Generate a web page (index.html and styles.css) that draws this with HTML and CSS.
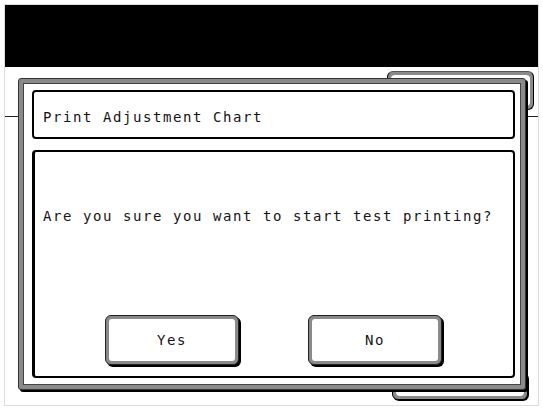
FILE: index.html
```html
<!DOCTYPE html>
<html>
<head>
<meta charset="utf-8">
<link rel="stylesheet" href="styles.css">
</head>
<body>
<div class="screen">
  <div class="header"></div>
  <div class="stage">
    <div class="rule"></div>
    <div class="tab tab-top"></div>
    <div class="tab tab-bottom"></div>
    <div class="dialog">
      <div class="dialog-inner">
        <div class="title-box">Print Adjustment Chart</div>
        <div class="message-box">
          <div class="message">Are you sure you want to start test printing?</div>
          <div class="buttons">
            <div class="btn"><div class="btn-face">Yes</div></div>
            <div class="btn"><div class="btn-face">No</div></div>
          </div>
        </div>
      </div>
    </div>
  </div>
</div>
</body>
</html>
```

FILE: styles.css
```css
* { box-sizing: border-box; }
html, body { margin: 0; padding: 0; background: #fff; }
body {
  width: 543px;
  height: 409px;
  overflow: hidden;
  font-family: "DejaVu Sans Mono", "Liberation Mono", monospace;
  font-size: 14px;
  letter-spacing: 1.57px;
  color: #141414;
}
.screen {
  margin: 4px;
  width: 535px;
  height: 402px;
  border: 1px solid #dcdcdc;
  display: flex;
  flex-direction: column;
}
.header {
  height: 62px;
  background: #000;
  flex: none;
}
.stage {
  position: relative;
  flex: 1;
  padding: 11px 0 0 13px;
}
.rule {
  position: absolute;
  left: 0;
  right: 0;
  top: 49px;
  height: 1px;
  background: #222;
}
.tab {
  position: absolute;
  background: #8a8a8a;
  border: 1px solid #000;
  border-radius: 6px;
}
.tab::before {
  content: "";
  position: absolute;
  inset: 3px;
  background: #fff;
  border-radius: 4px;
}
.tab-top {
  left: 382px;
  top: 4px;
  width: 147px;
  height: 39px;
  border-top-color: #555;
}
.tab-bottom {
  left: 387px;
  top: 305px;
  width: 136px;
  height: 28px;
  box-shadow: 1px 1px 0 #000;
}
.dialog {
  position: relative;
  z-index: 1;
  width: 508px;
  height: 312px;
  border: 1px solid #333;
  border-radius: 3px;
  padding: 4px;
  background: #8a8a8a;
  box-shadow: 2px 2px 0 #000;
}
.dialog-inner {
  height: 100%;
  background: #fff;
  border: 1px solid #444;
  padding: 6px 5px 0 8px;
  display: flex;
  flex-direction: column;
  gap: 11px;
}
.title-box {
  height: 49px;
  border: 2px solid #000;
  border-radius: 4px;
  padding-left: 9px;
  padding-top: 4px;
  display: flex;
  align-items: center;
}
.message-box {
  height: 228px;
  border: 2px solid #000;
  border-left-width: 3px;
  border-radius: 4px;
  display: flex;
  flex-direction: column;
  padding: 54px 0 11px 8px;
}
.message {
  line-height: 20px;
  height: 20px;
}
.buttons {
  margin-top: auto;
  display: flex;
  justify-content: center;
  gap: 69px;
  padding-right: 9px;
}
.btn {
  width: 134px;
  height: 50px;
  border: 1px solid #222;
  border-radius: 6px;
  padding: 3px;
  background: #8a8a8a;
  box-shadow: 2px 2px 0 #000;
}
.btn-face {
  height: 100%;
  background: #fff;
  border-radius: 3px;
  display: flex;
  align-items: center;
  justify-content: center;
}
```
